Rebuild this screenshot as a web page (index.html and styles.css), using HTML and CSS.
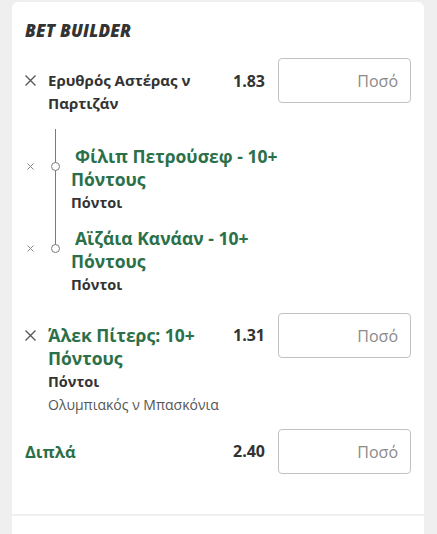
FILE: index.html
```html
<!DOCTYPE html>
<html lang="el">
<head>
  <meta charset="UTF-8" />
  <title>Bet Builder</title>
  <link rel="stylesheet" href="styles.css">
</head>
<body>
  <div class="slip">
    <h2 class="slip-title">BET BUILDER</h2>

    <div class="sel sel-first">
      <span class="remove">
        <svg width="11" height="11" viewBox="0 0 11 11"><path d="M0.5 0.5 L10.5 10.5 M10.5 0.5 L0.5 10.5" stroke="#555" stroke-width="1.3" fill="none"/></svg>
      </span>
      <div class="sel-info">
        <div class="sel-name">Ερυθρός Αστέρας ν Παρτιζάν</div>
      </div>
      <div class="odds">1.83</div>
      <input class="stake" type="text" placeholder="Ποσό">
    </div>

    <div class="legs">
      <div class="leg">
        <span class="leg-remove">
          <svg width="7" height="7" viewBox="0 0 7 7"><path d="M0.5 0.5 L6.5 6.5 M6.5 0.5 L0.5 6.5" stroke="#888" stroke-width="1" fill="none"/></svg>
        </span>
        <span class="leg-dot"></span>
        <div class="leg-info">
          <div class="leg-name">Φίλιπ Πετρούσεφ - 10+ Πόντους</div>
          <div class="leg-market">Πόντοι</div>
        </div>
      </div>
      <div class="leg">
        <span class="leg-remove">
          <svg width="7" height="7" viewBox="0 0 7 7"><path d="M0.5 0.5 L6.5 6.5 M6.5 0.5 L0.5 6.5" stroke="#888" stroke-width="1" fill="none"/></svg>
        </span>
        <span class="leg-dot"></span>
        <div class="leg-info">
          <div class="leg-name">Αϊζάια Κανάαν - 10+ Πόντους</div>
          <div class="leg-market">Πόντοι</div>
        </div>
      </div>
    </div>

    <div class="sel sel-single">
      <span class="remove">
        <svg width="11" height="11" viewBox="0 0 11 11"><path d="M0.5 0.5 L10.5 10.5 M10.5 0.5 L0.5 10.5" stroke="#555" stroke-width="1.3" fill="none"/></svg>
      </span>
      <div class="sel-info">
        <div class="sel-name green">Άλεκ Πίτερς: 10+ Πόντους</div>
        <div class="sel-market">Πόντοι</div>
        <div class="sel-event">Ολυμπιακός ν Μπασκόνια</div>
      </div>
      <div class="odds">1.31</div>
      <input class="stake" type="text" placeholder="Ποσό">
    </div>

    <div class="multi">
      <div class="multi-name">Διπλά</div>
      <div class="odds">2.40</div>
      <input class="stake" type="text" placeholder="Ποσό">
    </div>

    <div class="slip-footer"></div>
  </div>
</body>
</html>
```

FILE: styles.css
```css
body {
  margin: 0;
  background: #efefef;
  font-family: "Open Sans", "Noto Sans", sans-serif;
  color: #333;
}

.slip {
  margin: 2px 13px 0 12px;
  background: #fff;
  border-radius: 6px 6px 0 0;
  padding-top: 19px;
  min-height: 532px;
}

.slip-title {
  margin: 0 13px;
  font-size: 17px;
  line-height: 20px;
  font-weight: 800;
  font-style: italic;
  letter-spacing: 0.2px;
  color: #333;
}

.sel {
  display: flex;
  align-items: flex-start;
  padding: 0 13px;
}

.sel-first {
  margin-top: 17px;
}

.sel-single {
  margin-top: 17px;
}

.remove {
  width: 23px;
  flex-shrink: 0;
  margin-top: 17px;
  line-height: 0;
}

.sel-info {
  flex: 1;
  margin-top: 11px;
}

.sel-name {
  font-size: 15px;
  line-height: 23px;
  font-weight: 700;
  color: #333;
}

.green {
  color: #2b7049;
  font-size: 17.5px;
}

.sel-market {
  font-size: 14.5px;
  line-height: 23px;
  font-weight: 700;
}

.sel-event {
  font-size: 14px;
  line-height: 23px;
  color: #555;
}

.odds {
  width: 44px;
  margin-right: 13px;
  text-align: right;
  font-size: 16px;
  font-weight: 700;
  line-height: 45px;
  color: #333;
}

.sel-first .odds {
  line-height: 46px;
}

.stake {
  box-sizing: border-box;
  width: 133px;
  height: 45px;
  flex-shrink: 0;
  border: 1px solid #c2c2c2;
  border-radius: 4px;
  padding: 0 12px;
  text-align: right;
  font-family: inherit;
  font-size: 16px;
  color: #333;
}

.stake::placeholder {
  color: #8a8a8a;
}

.legs {
  position: relative;
  margin-top: 14px;
  padding: 16px 13px 0;
}

.legs::before {
  content: "";
  position: absolute;
  left: 43px;
  top: 0;
  height: 120px;
  width: 1px;
  background: #7a7a7a;
}

.leg {
  display: flex;
  align-items: flex-start;
}

.leg + .leg {
  margin-top: 13px;
}

.leg-remove {
  margin: 18px 0 0 2px;
  width: 7px;
  line-height: 0;
}

.leg-dot {
  position: relative;
  box-sizing: border-box;
  width: 9px;
  height: 9px;
  margin: 17px 0 0 17px;
  border: 1.3px solid #7a7a7a;
  border-radius: 50%;
  background: #fff;
}

.leg-info {
  width: 225px;
  margin-left: 11px;
}

.leg-name {
  font-size: 17.5px;
  line-height: 23px;
  font-weight: 700;
  color: #2b7049;
  text-indent: 4px;
}

.leg-market {
  font-size: 14.5px;
  line-height: 23px;
  font-weight: 700;
  color: #333;
}

.multi {
  display: flex;
  align-items: center;
  margin-top: 13px;
  padding: 0 13px;
}

.multi-name {
  flex: 1;
  font-size: 16.5px;
  font-weight: 700;
  color: #2b7049;
}

.slip-footer {
  margin-top: 40px;
  border-top: 2px solid #efefef;
}
```
